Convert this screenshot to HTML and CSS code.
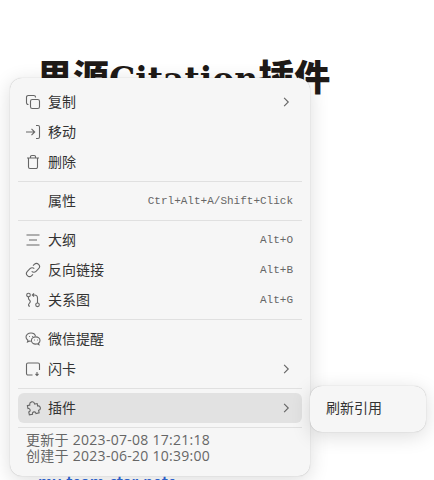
FILE: index.html
```html
<!DOCTYPE html>
<html lang="zh">
<head>
    <meta charset="UTF-8">
    <title>思源Citation插件</title>
    <link rel="stylesheet" href="styles.css">
</head>
<body>
    <h1 class="title">思源<span class="title-latin">Citation</span>插件</h1>
    <p class="link-line"><span class="fold"></span><a href="#">my-team-star-note</a></p>

    <!-- block menu, sits over the document -->
    <div class="menu">
        <div class="item">
            <svg class="icon" viewBox="0 0 16 16"><path d="M3.500 10.500h-.3A1.700 1.700 0 0 1 1.500 8.800V3.200A1.700 1.700 0 0 1 3.200 1.500H8.800a1.700 1.700 0 0 1 1.700 1.700v.3"/><rect x="5.500" y="5.500" width="9" height="9" rx="1.800"/></svg>
            <span class="label">复制</span>
            <svg class="arrow" viewBox="0 0 16 16"><path d="M5.500 2.500 11 8l-5.500 5.500"/></svg>
        </div>
        <div class="item">
            <svg class="icon" viewBox="0 0 16 16"><path d="M1 8h8.500M6.500 4.800 9.700 8l-3.200 3.200M11 1.500h2a1.500 1.500 0 0 1 1.500 1.500v10a1.500 1.500 0 0 1-1.500 1.500h-2"/></svg>
            <span class="label">移动</span>
        </div>
        <div class="item">
            <svg class="icon" viewBox="0 0 16 16"><path d="M2 4h12M5.500 4V2.800a1.300 1.300 0 0 1 1.300-1.300h2.400a1.300 1.300 0 0 1 1.300 1.300V4M3.500 4v9a1.500 1.500 0 0 0 1.500 1.500h6a1.500 1.500 0 0 0 1.500-1.500V4"/></svg>
            <span class="label">删除</span>
        </div>
        <div class="sep"></div>
        <div class="item">
            <span class="icon-space"></span>
            <span class="label">属性</span>
            <span class="keys">Ctrl+Alt+A/Shift+Click</span>
        </div>
        <div class="sep"></div>
        <div class="item">
            <svg class="icon" viewBox="0 0 16 16"><path d="M1.500 3h13M4 8h8M1.500 13h13"/></svg>
            <span class="label">大纲</span>
            <span class="keys">Alt+O</span>
        </div>
        <div class="item">
            <svg class="icon" viewBox="0 0 16 16"><path d="M6.700 9.300a3 3 0 0 0 4.300 0l2.600-2.600a3 3 0 0 0-4.300-4.300L8 3.700M9.300 6.700a3 3 0 0 0-4.300 0L2.400 9.300a3 3 0 0 0 4.300 4.300L8 12.300"/></svg>
            <span class="label">反向链接</span>
            <span class="keys">Alt+B</span>
        </div>
        <div class="item">
            <svg class="icon" viewBox="0 0 16 16"><circle cx="3.500" cy="3" r="1.800"/><circle cx="12.500" cy="12.800" r="1.800"/><path d="M3.500 4.800v1.700c0 1.500 1.800 1.500 1.800 3S3.500 11.500 3.500 13c0 .9.700 1.300 1.500 1.300M12.500 11V6c0-2-1.500-3-3.200-3H7.500M9 1.300 7.300 3 9 4.700"/></svg>
            <span class="label">关系图</span>
            <span class="keys">Alt+G</span>
        </div>
        <div class="sep"></div>
        <div class="item">
            <svg class="icon" viewBox="0 0 16 16"><path d="M10.500 5C10 3.200 8.200 2 6 2 3.300 2 1 3.800 1 6.100c0 1.300.7 2.400 1.900 3.200L2.500 11l1.900-1c.5.100.9.200 1.400.2"/><path d="M15 9.500c0-2-1.900-3.600-4.300-3.600S6.400 7.500 6.400 9.500s1.900 3.600 4.300 3.600c.6 0 1.100-.1 1.600-.3l1.600.9-.4-1.500c.9-.7 1.500-1.600 1.500-2.700Z"/><path d="M4 5.500h.8M7 5.500h.8M9 9h.8M12 9h.8"/></svg>
            <span class="label">微信提醒</span>
        </div>
        <div class="item">
            <svg class="icon" viewBox="0 0 16 16"><path d="M7.500 14H3a1.500 1.500 0 0 1-1.500-1.500V3.500A1.500 1.500 0 0 1 3 2h10a1.500 1.500 0 0 1 1.500 1.500V9M12 11v3.500M10.500 13l1.500 1.500 1.500-1.500"/></svg>
            <span class="label">闪卡</span>
            <svg class="arrow" viewBox="0 0 16 16"><path d="M5.500 2.500 11 8l-5.500 5.500"/></svg>
        </div>
        <div class="sep"></div>
        <div class="item item-active">
            <svg class="icon" viewBox="0 0 16 16"><path transform="rotate(-12 8 8)" d="M3 4.500h2.500c0-1.500 1-2.800 2.500-2.800s2.500 1.300 2.500 2.800h2.500v2.500c1.300 0 2.200 1 2.200 2.200s-.9 2.300-2.200 2.300v2.500h-3.200c0-1.200-.7-2-1.800-2s-1.800.8-1.800 2H3v-3c1.100 0 1.800-.7 1.800-1.800S4.100 7.500 3 7.500Z"/></svg>
            <span class="label">插件</span>
            <svg class="arrow" viewBox="0 0 16 16"><path d="M5.500 2.500 11 8l-5.500 5.500"/></svg>
        </div>
        <div class="sep"></div>
        <div class="meta">
            更新于 2023-07-08 17:21:18<br>
            创建于 2023-06-20 10:39:00
        </div>
    </div>

    <div class="submenu">
        <div class="sub-item">刷新引用</div>
    </div>
</body>
</html>
```

FILE: styles.css
```css
body {
    margin: 0;
    height: 480px;
    overflow: hidden;
    background: #fff;
    font-family: "Noto Sans CJK SC", "Noto Sans", sans-serif;
    color: #333;
}
.title {
    margin: 0;
    padding: 51px 0 0 37px;
    font-family: "Noto Sans CJK SC", sans-serif;
    font-size: 36px;
    line-height: 48px;
    font-weight: 900;
    color: #1f1a17;
    white-space: nowrap;
}
.title-latin {
    font-family: "DejaVu Serif", serif;
    font-size: 33px;
    font-weight: bold;
}
.link-line {
    display: flex;
    gap: 12px;
    margin: 0;
    padding: 368px 0 0 18px;
    font-size: 15px;
    line-height: 20px;
    font-weight: bold;
}
.link-line a {
    color: #3068d8;
    text-decoration: none;
}
.fold {
    width: 8px;
    height: 0;
    margin-top: 10px;
    border-top: 2px dotted #aaa;
}
.menu {
    position: absolute;
    left: 10px;
    top: 78px;
    width: 300px;
    height: 398px;
    box-sizing: border-box;
    padding: 9px 8px;
    background: #f6f6f6;
    border-radius: 12px;
    box-shadow: 0 0 1px rgba(0,0,0,0.3), 0 4px 20px rgba(0,0,0,0.14);
}
.item {
    display: flex;
    align-items: center;
    height: 30px;
    padding: 0 9px 0 8px;
    border-radius: 6px;
    font-size: 14px;
}
.item-active {
    background: #e2e2e2;
}
.icon {
    width: 16px;
    height: 16px;
    margin: 0 7px 0 -1px;
    fill: none;
    stroke: #666;
    stroke-width: 1.1;
    flex: none;
}
.icon-space {
    width: 22px;
    flex: none;
}
.label {
    flex: 1;
    padding-bottom: 2px;
    white-space: nowrap;
}
.arrow {
    width: 12px;
    height: 12px;
    margin-right: 1px;
    fill: none;
    stroke: #666;
    stroke-width: 1.5;
    flex: none;
}
.keys {
    font-family: "Liberation Mono", monospace;
    font-size: 11px;
    color: #666;
}
.sep {
    height: 1px;
    margin: 4px 0;
    background: #e0e0e0;
}
.meta {
    padding: 0 0 0 8px;
    font-family: "Open Sans", "Noto Sans CJK SC", sans-serif;
    font-size: 14px;
    letter-spacing: 0.28px;
    line-height: 16px;
    color: #666;
    white-space: nowrap;
}
.submenu {
    position: absolute;
    left: 310px;
    top: 386px;
    width: 116px;
    height: 46px;
    box-sizing: border-box;
    padding: 8px;
    background: #f6f6f6;
    border-radius: 12px;
    box-shadow: 0 0 1px rgba(0,0,0,0.3), 0 4px 20px rgba(0,0,0,0.14);
}
.sub-item {
    height: 30px;
    padding-left: 8px;
    font-size: 14px;
    line-height: 27px;
}
```
